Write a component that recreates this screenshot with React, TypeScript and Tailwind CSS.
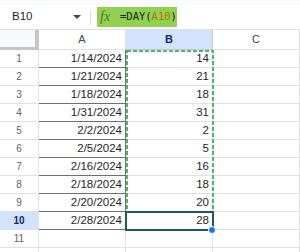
const rows = [
  { date: "1/14/2024", day: 14 },
  { date: "1/21/2024", day: 21 },
  { date: "1/18/2024", day: 18 },
  { date: "1/31/2024", day: 31 },
  { date: "2/2/2024", day: 2 },
  { date: "2/5/2024", day: 5 },
  { date: "2/16/2024", day: 16 },
  { date: "2/18/2024", day: 18 },
  { date: "2/20/2024", day: 20 },
  { date: "2/28/2024", day: 28 },
];

const font = { fontFamily: '"Liberation Sans", Arial, sans-serif' };

export default function App() {
  const body = [...rows, null, null];

  return (
    <div className="w-[300px] h-[252px] overflow-hidden bg-white text-[#1f1f1f]" style={font}>
      {/* top strip */}
      <div className="h-[5px] bg-[#f9fbfd]" />

      {/* formula bar */}
      <div className="h-[25px] flex items-center border-b border-[#e1e1e1]">
        <div className="w-[90px] flex items-center pl-[12px] pr-[9px] justify-between">
          <span className="text-[11.5px] text-[#1f1f1f]">B10</span>
          <span className="w-0 h-0 border-l-[4px] border-r-[4px] border-t-[4px] border-l-transparent border-r-transparent border-t-[#444746]" />
        </div>
        <div className="w-px h-[15px] bg-[#dadce0]" />
        <div className="ml-[6px] h-[20px] w-[80px] bg-[#92d050] flex items-center pl-[3px]">
          <span
            className="italic text-[14px] text-[#4d7a2c] w-[20px] leading-none"
            style={{ fontFamily: '"Liberation Serif", serif' }}
          >
            fx
          </span>
          <span
            className="text-[10.5px] text-[#1a1a1a] font-bold"
            style={{ fontFamily: '"DejaVu Sans Mono", "Liberation Mono", monospace', fontWeight: 500 }}
          >
            =DAY(<span className="text-[#a5790a]">A10</span>)
          </span>
        </div>
      </div>

      {/* column headers */}
      <div className="grid grid-cols-[39px_87px_87px_87px] h-[20px]">
        <div className="bg-[#f8f9fa] border-r-[4px] border-b-[3px] border-[#c4c7c5]" />
        <div className="flex items-center justify-center text-[11px] text-[#444746] border-r border-b border-[#e1e1e1]">
          A
        </div>
        <div className="flex items-center justify-center text-[11px] font-bold text-[#0b2a5b] bg-[#d3e3fd] border-r border-b border-[#c4c7c5]">
          B
        </div>
        <div className="flex items-center justify-center text-[11px] text-[#444746] border-r border-b border-[#e1e1e1]">
          C
        </div>
      </div>

      {/* body */}
      <div className="relative">
        {body.map((r, i) => {
          const active = i === 9;
          return (
            <div key={i} className="grid grid-cols-[39px_87px_87px_87px] h-[18px]">
              <div
                className={
                  "flex items-center justify-center text-[10px] border-r border-b border-[#e1e1e1] " +
                  (active ? "bg-[#d3e3fd] font-bold text-[#0b2a5b]" : "text-[#5f6368]")
                }
              >
                {i < 11 ? i + 1 : ""}
              </div>
              <div
                className={
                  "flex items-center justify-end pr-[3px] text-[11.5px] " +
                  (r ? "border-r border-b border-[#6f6f6f]" : "border-r border-b border-[#e1e1e1]")
                }
              >
                {r?.date}
              </div>
              <div className="flex items-center justify-end pr-[3px] text-[11.5px] border-r border-b border-[#e1e1e1]">
                {r?.day}
              </div>
              <div className="border-r border-b border-[#e1e1e1]" />
            </div>
          );
        })}

        {/* copy marquee B1:B9 */}
        <svg className="absolute left-[126px] top-0" width="88" height="163">
          <rect
            x="1"
            y="1"
            width="86"
            height="161"
            fill="none"
            stroke="#4fb662"
            strokeWidth="2"
            strokeDasharray="4 2"
          />
        </svg>

        {/* selected B10 */}
        <div className="absolute left-[125px] top-[161px] w-[89px] h-[20px] border-2 border-[#1d5c57]" />
        <div className="absolute left-[208px] top-[176px] w-[8px] h-[8px] rounded-full bg-[#1a73e8] border border-white" />
      </div>
    </div>
  );
}
